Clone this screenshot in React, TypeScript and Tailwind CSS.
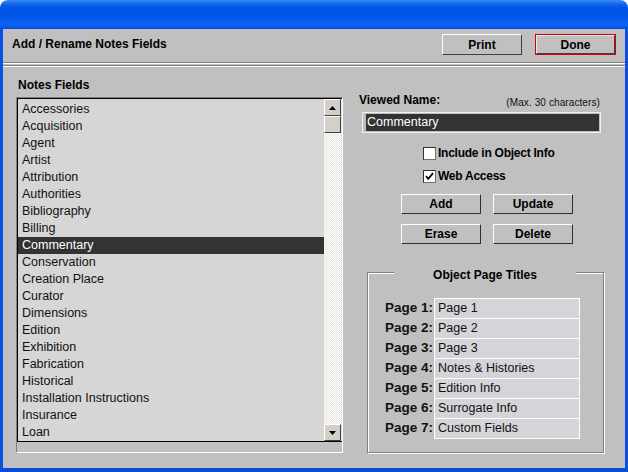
const items = [
  "Accessories",
  "Acquisition",
  "Agent",
  "Artist",
  "Attribution",
  "Authorities",
  "Bibliography",
  "Billing",
  "Commentary",
  "Conservation",
  "Creation Place",
  "Curator",
  "Dimensions",
  "Edition",
  "Exhibition",
  "Fabrication",
  "Historical",
  "Installation Instructions",
  "Insurance",
  "Loan",
];

const pages = [
  "Page 1",
  "Page 2",
  "Page 3",
  "Notes & Histories",
  "Edition Info",
  "Surrogate Info",
  "Custom Fields",
];

function RaisedButton({ label, className = "" }: { label: string; className?: string }) {
  return (
    <div
      className={
        "h-[20px] w-[80px] flex items-center justify-center bg-[#c0c0c0] border border-t-white border-l-white border-b-[#303030] border-r-[#303030] text-[12px] font-bold leading-none " +
        className
      }
    >
      {label}
    </div>
  );
}

function ScrollBtn({ down = false }: { down?: boolean }) {
  return (
    <div className="h-[17px] w-[17px] shrink-0 bg-[#d4d0c8] border border-t-white border-l-white border-b-[#404040] border-r-[#404040] flex items-center justify-center">
      <svg width="7" height="4" viewBox="0 0 7 4">
        {down ? <polygon points="0,0 7,0 3.5,4" fill="#000" /> : <polygon points="0,4 7,4 3.5,0" fill="#000" />}
      </svg>
    </div>
  );
}

function CheckBox({ checked, label }: { checked: boolean; label: string }) {
  return (
    <div className="flex items-center h-[14px]">
      <div className="w-[13px] h-[13px] bg-white border border-t-[#303030] border-l-[#303030] border-b-[#707070] border-r-[#707070] flex items-center justify-center">
        {checked && (
          <svg width="9" height="9" viewBox="0 0 9 9">
            <path d="M1 4.2 L3.3 6.8 L8 1.2" stroke="#000" strokeWidth="1.8" fill="none" />
          </svg>
        )}
      </div>
      <span className="ml-[2px] text-[12px] font-bold leading-[14px] tracking-[-0.25px]">{label}</span>
    </div>
  );
}

export default function App() {
  return (
    <div className="w-[628px] h-[472px] bg-white font-['Liberation_Sans',Arial,sans-serif] text-black select-none">
      <div className="w-full h-full flex flex-col rounded-t-[8px] overflow-hidden">
        {/* title bar */}
        <div className="h-[29px] shrink-0 bg-[linear-gradient(180deg,#3d8cf7_0%,#2176f2_8%,#0a60ea_18%,#0055e5_30%,#0054e3_55%,#0a62f2_80%,#0a5cf0_92%,#0046d6_100%)]" />
        {/* body */}
        <div className="flex-1 flex flex-col bg-[#c0c0c0] border-l-[3px] border-r-[3px] border-b-[4px] border-l-[#0b50e2] border-r-[#0b50e2] border-b-[#0a4ad8]">
          {/* header */}
          <div className="h-[33px] shrink-0 pt-[5px] pl-[9px] pr-[9px] flex items-start justify-between">
            <div className="h-[21px] leading-[21px] text-[12px] font-bold">Add / Rename Notes Fields</div>
            <div className="flex gap-[13px]">
              <div className="h-[21px] w-[80px] flex items-center justify-center border border-t-white border-l-white border-b-[#404040] border-r-[#404040] text-[12px] font-bold">
                Print
              </div>
              <div className="h-[21px] w-[81px] border border-[#d00000]">
                <div className="h-full w-full flex items-center justify-center border border-t-[#e8e8e8] border-l-[#e8e8e8] border-b-[#404040] border-r-[#404040] text-[12px] font-bold">
                  Done
                </div>
              </div>
            </div>
          </div>
          {/* divider */}
          <div className="shrink-0 h-[2px] border-t border-t-[#808080] border-b border-b-white" />
          <div className="shrink-0 h-[1px]" />
          <div className="shrink-0 h-[2px] border-t border-t-[#808080] border-b border-b-white" />

          {/* content */}
          <div className="flex-1 flex pl-[13px]">
            {/* left column */}
            <div className="w-[327px] flex flex-col">
              <div className="mt-[11px] text-[12px] font-bold leading-[14px] pl-[2px]">Notes Fields</div>
              <div className="mt-[5px] h-[356px] border border-t-[#808080] border-l-[#808080] border-b-white border-r-white">
                <div className="h-[344px] flex border-t border-l border-b border-black">
                  <div className="flex-1 bg-[#d6d6d6] pt-[2px]">
                    {items.map((it) => (
                      <div
                        key={it}
                        className={
                          "h-[17px] leading-[17px] pl-[4px] text-[12.5px] " +
                          (it === "Commentary" ? "bg-[#333333] text-white" : "text-[#111]")
                        }
                      >
                        {it}
                      </div>
                    ))}
                  </div>
                  <div className="w-[17px] flex flex-col bg-[repeating-conic-gradient(#ffffff_0%_25%,#e6e4dc_0%_50%)] bg-[length:2px_2px]">
                    <ScrollBtn />
                    <div className="h-[17px] w-[17px] shrink-0 bg-[#d4d0c8] border border-t-white border-l-white border-b-[#404040] border-r-[#404040]" />
                    <div className="flex-1" />
                    <ScrollBtn down />
                  </div>
                  <div className="w-[1px] bg-[#e4e4e4]" />
                </div>
              </div>
            </div>

            {/* right column */}
            <div className="ml-[16px] w-[250px] flex flex-col">
              <div className="mt-[26px] flex items-end justify-between pr-[9px]">
                <span className="text-[12px] font-bold leading-[14px]">Viewed Name:</span>
                <span className="mb-[-2px] text-[10px] leading-[12px] tracking-[0.1px] text-[#111]">(Max. 30 characters)</span>
              </div>
              <div className="mt-[5px] ml-[3px] w-[239px] h-[21px] border border-[#f0f0f0] bg-[#c0c0c0] pl-[3px] pt-[1px] pr-[1px] pb-[1px]">
                <div className="h-full bg-[#333333] text-white text-[12.5px] leading-[17px] pl-[1px]">Commentary</div>
              </div>
              <div className="mt-[13px] ml-[64px]">
                <CheckBox checked={false} label="Include in Object Info" />
              </div>
              <div className="mt-[9px] ml-[64px]">
                <CheckBox checked={true} label="Web Access" />
              </div>
              <div className="mt-[11px] ml-[42px] flex gap-[12px]">
                <RaisedButton label="Add" />
                <RaisedButton label="Update" />
              </div>
              <div className="mt-[10px] ml-[42px] flex gap-[12px]">
                <RaisedButton label="Erase" />
                <RaisedButton label="Delete" />
              </div>

              {/* group box */}
              <div className="relative mt-[28px] ml-[8px] w-[237px] h-[181px] border border-[#808080] shadow-[inset_1px_1px_0_#ffffff,1px_1px_0_#ffffff]">
                <div className="absolute top-[-5px] left-[26px] w-[182px] bg-[#c0c0c0] text-center text-[12px] font-bold leading-[14px]">
                  Object Page Titles
                </div>
                <div className="mt-[25px] flex flex-col">
                  {pages.map((p, i) => (
                    <div key={p} className="flex h-[20px]">
                      <div className="w-[65px] text-right text-[13.5px] font-bold leading-[20px] text-[#111]">
                        Page {i + 1}:
                      </div>
                      <div
                        className={
                          "ml-[1px] w-[146px] bg-[#d4d4d9] border-t border-l border-r border-white pl-[3px] text-[12.5px] leading-[19px] text-[#111] " +
                          (i === pages.length - 1 ? "border-b h-[21px]" : "")
                        }
                      >
                        {p}
                      </div>
                    </div>
                  ))}
                </div>
              </div>
            </div>
          </div>
        </div>
      </div>
    </div>
  );
}
